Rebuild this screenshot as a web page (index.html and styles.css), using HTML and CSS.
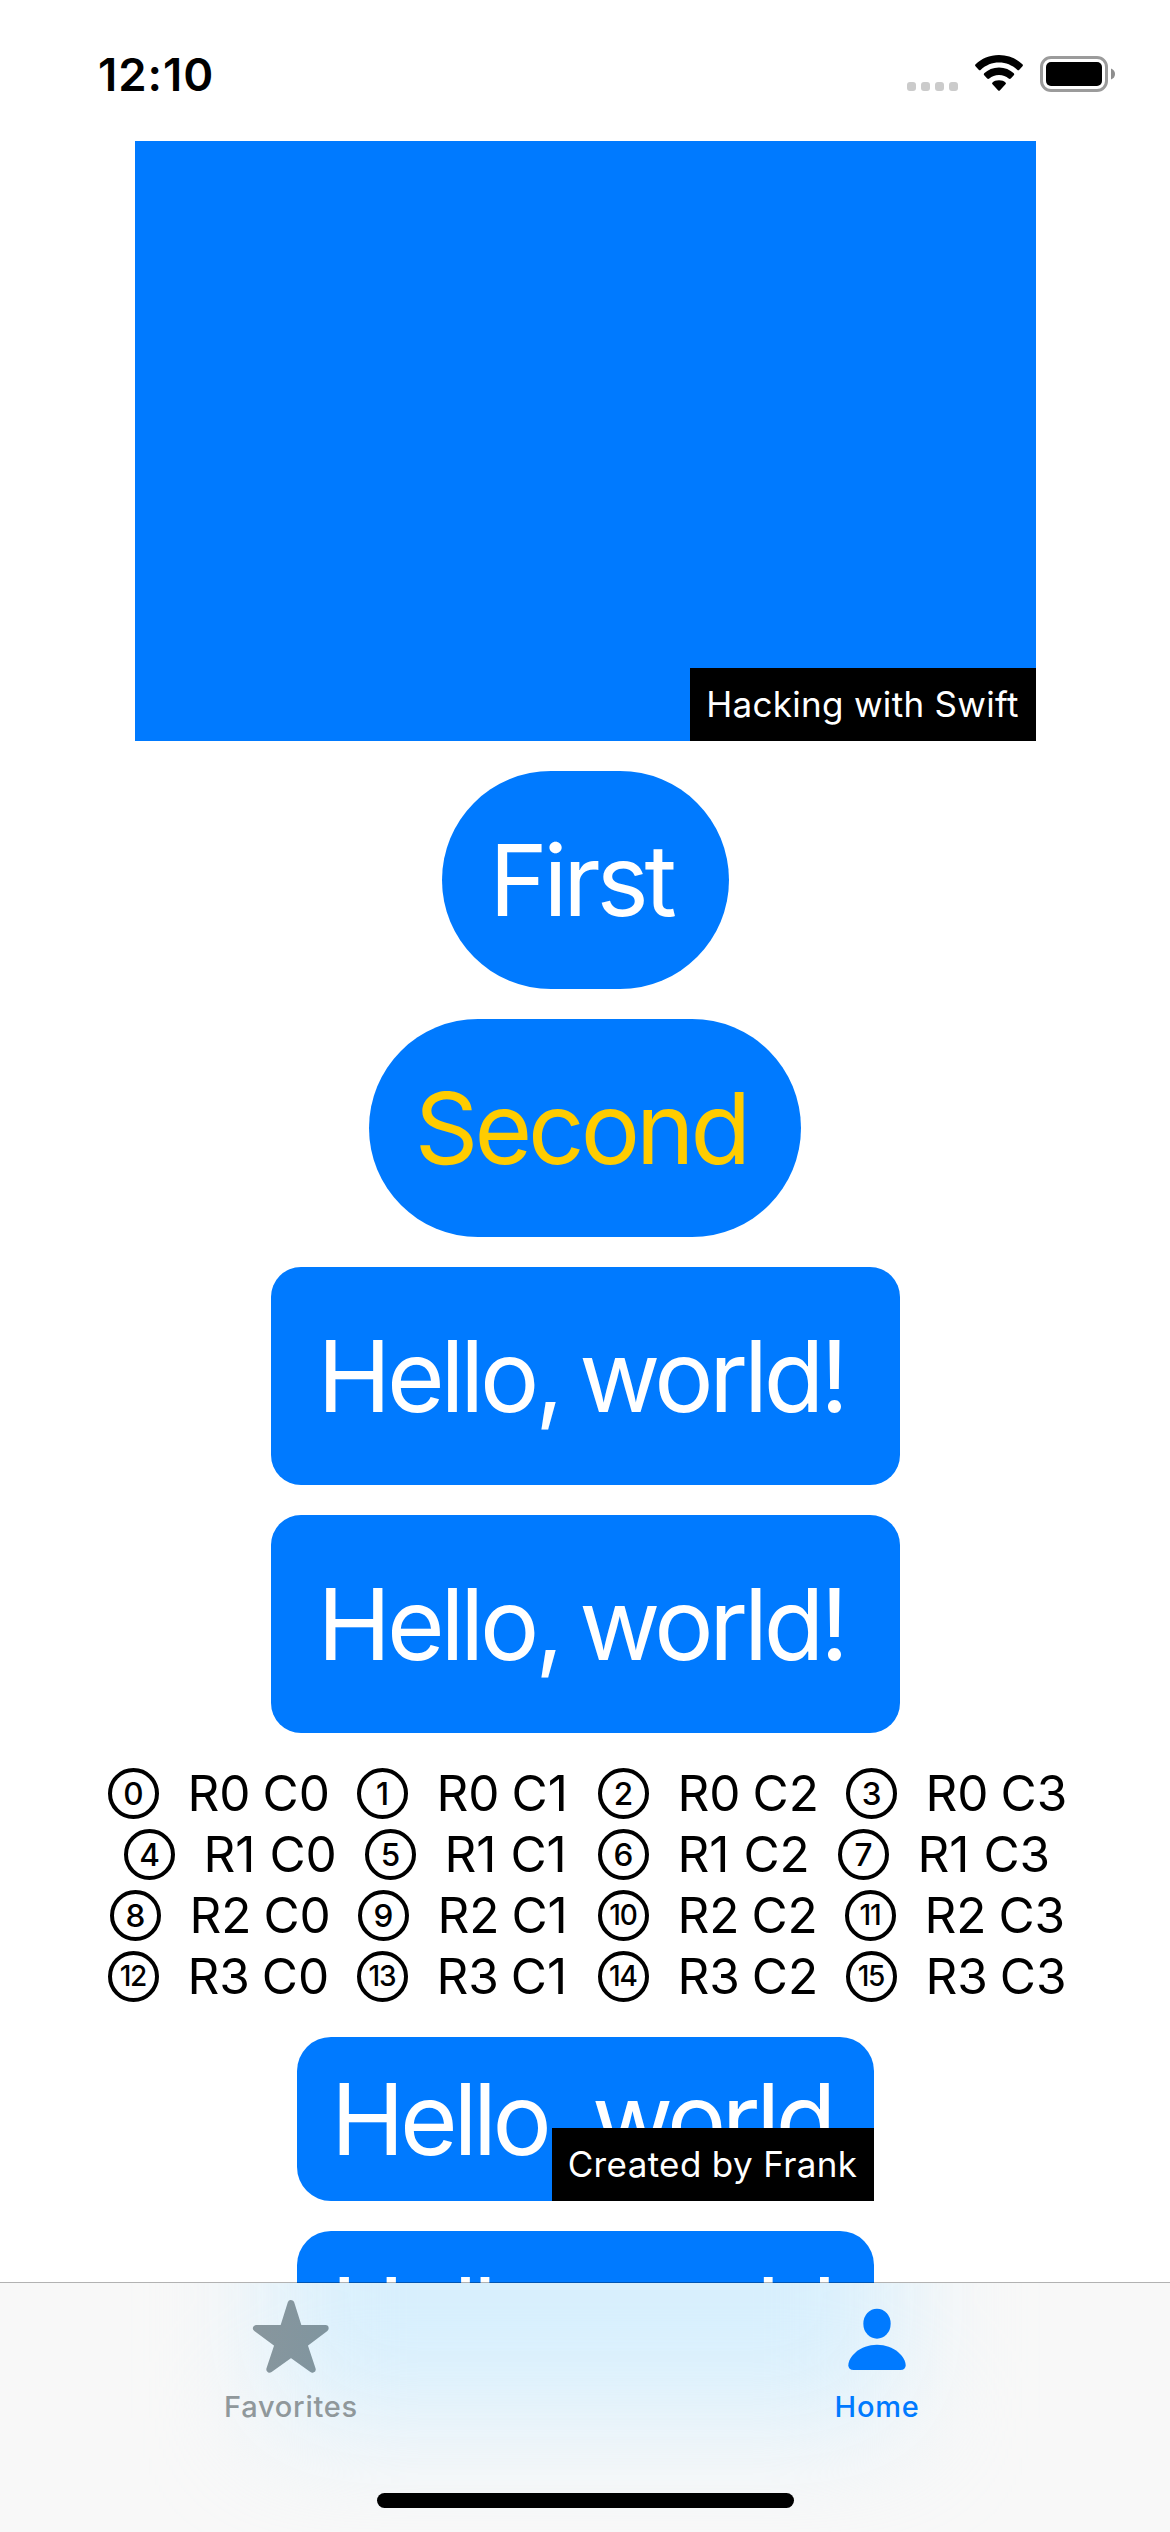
FILE: index.html
```html
<!DOCTYPE html>
<html lang="en">
<head>
<meta charset="utf-8">
<title>Home</title>
<link rel="stylesheet" href="styles.css">
</head>
<body>
<div class="screen">
  <header class="status">
    <span class="time">12:10</span>
    <svg class="status-icons" width="212" height="40" viewBox="0 0 212 40">
      <g fill="#cbcbcb">
        <rect x="0" y="27" width="9" height="9" rx="3"/><rect x="14" y="27" width="9" height="9" rx="3"/>
        <rect x="28" y="27" width="9" height="9" rx="3"/><rect x="42" y="27" width="9" height="9" rx="3"/>
      </g>
      <path d="M92 0C82.500 0 74.500 3.500 68.600 9.300Q67.600 10.300 68.500 11.300L71.700 14.700Q72.700 15.700 73.800 14.700C79 10.200 85 7.600 92 7.600S105 10.200 110.200 14.700Q111.300 15.700 112.300 14.700L115.500 11.300Q116.400 10.300 115.400 9.300C109.500 3.500 101.500 0 92 0Z"/>
      <path d="M92 12.600C86 12.600 81 14.900 77.200 18.300Q76.200 19.300 77.200 20.300L80.200 23.500Q81.200 24.400 82.300 23.500C85 21.300 88 20 92 20S99 21.300 101.700 23.500Q102.800 24.400 103.800 23.500L106.800 20.300Q107.800 19.300 106.800 18.300C103 14.900 98 12.600 92 12.600Z"/>
      <path d="M92 25.300C89 25.300 87 26.200 85.500 27.400Q84.500 28.300 85.500 29.300L91 35.300Q92 36.400 93 35.300L98.500 29.300Q99.500 28.300 98.500 27.400C97 26.200 95 25.300 92 25.300Z"/>
      <rect x="134.500" y="2.500" width="65" height="33" rx="9.500" fill="none" stroke="#9b9b9b" stroke-width="3"/>
      <rect x="139" y="7" width="56" height="24" rx="5"/>
      <path d="M204 13.500Q208 15 208 19T204 24.500Z" fill="#8e8e8e"/>
    </svg>
  </header>

  <main class="content">
    <div class="photo"><span class="caption hacking">Hacking with Swift</span></div>
    <div class="pill first">First</div>
    <div class="pill second">Second</div>
    <div class="card">Hello, world!</div>
    <div class="card">Hello, world!</div>
    <div class="matrix">
      <div class="line r0">
        <span class="cell"><i class="num">0</i>R0 C0</span><span class="cell"><i class="num">1</i>R0 C1</span><span class="cell"><i class="num">2</i>R0 C2</span><span class="cell"><i class="num">3</i>R0 C3</span>
      </div>
      <div class="line r1">
        <span class="cell"><i class="num">4</i>R1 C0</span><span class="cell"><i class="num">5</i>R1 C1</span><span class="cell"><i class="num">6</i>R1 C2</span><span class="cell"><i class="num">7</i>R1 C3</span>
      </div>
      <div class="line r2">
        <span class="cell"><i class="num">8</i>R2 C0</span><span class="cell"><i class="num">9</i>R2 C1</span><span class="cell"><i class="num two">10</i>R2 C2</span><span class="cell"><i class="num two">11</i>R2 C3</span>
      </div>
      <div class="line r3">
        <span class="cell"><i class="num two">12</i>R3 C0</span><span class="cell"><i class="num two">13</i>R3 C1</span><span class="cell"><i class="num two">14</i>R3 C2</span><span class="cell"><i class="num two">15</i>R3 C3</span>
      </div>
    </div>
    <div class="banner">Hello, world<span class="caption created">Created by Frank</span></div>
    <div class="banner">Hello, world</div>
  </main>

  <nav class="tabs">
    <div class="glow"></div>
    <a class="tab">
      <svg class="tab-icon" width="80" height="80" viewBox="154 81 240 240">
        <defs><linearGradient id="star" x1="0" x2="1"><stop offset="0" stop-color="#88969d"/><stop offset="1" stop-color="#80959f"/></linearGradient></defs>
        <path fill="url(#star)" stroke="url(#star)" stroke-width="20" stroke-linejoin="round" d="M274 100L297.600 175L377 175L313.300 223.300L338 298L274 252L210 298L234.700 223.300L170 175L250.400 175Z"/>
      </svg>
      <span class="label">Favorites</span>
    </a>
    <a class="tab active">
      <svg class="tab-icon" width="80" height="80" viewBox="110 81 240 240" fill="#007aff">
        <ellipse cx="230" cy="161" rx="41" ry="45"/>
        <path d="M144 286C144 260 179 224 230 224S316 260 316 286Q316 300 300 300H160Q144 300 144 286Z"/>
      </svg>
      <span class="label">Home</span>
    </a>
    <div class="indicator"></div>
  </nav>
</div>
</body>
</html>
```

FILE: styles.css
```css
* { box-sizing: border-box; }
body { margin: 0; background: #fff; font-family: Inter, "Liberation Sans", sans-serif; color: #000; }
.screen { position: relative; width: 1170px; height: 2532px; overflow: hidden; }

.status { height: 141px; display: flex; justify-content: space-between; align-items: flex-start; padding: 55px 51px 0 98px; }
.time { font-size: 45.5px; font-weight: 600; line-height: 40px; letter-spacing: 1px; }

.content { display: flex; flex-direction: column; align-items: center; gap: 30px; }
.photo { width: 901px; height: 600px; background: #007aff; display: flex; justify-content: flex-end; align-items: flex-end; }
.caption { height: 73px; background: #000; color: #fff; font-size: 35px; line-height: 73px; text-align: center; white-space: nowrap; letter-spacing: .3px; }
.hacking { width: 346px; }
.created { width: 322px; position: absolute; right: 0; bottom: 0; }

.pill, .card { height: 218px; line-height: 219px; background: #007aff; color: #fff; font-size: 99px; text-align: center; white-space: nowrap; padding-right: 8px; }
.pill { border-radius: 109px; }
.first { width: 287px; letter-spacing: -4.200px; }
.second { width: 432px; color: #fc0; letter-spacing: -4px; }
.card { width: 629px; border-radius: 30px; letter-spacing: -4.200px; word-spacing: -4px; }

.matrix { width: 1170px; height: 244px; font-size: 49.500px; word-spacing: -2px; }
.line { display: grid; height: 61px; align-items: center; }
.r0 { padding-left: 108px; grid-template-columns: 249px 241px 248px 1fr; }
.r1 { padding-left: 124px; grid-template-columns: 241px 233px 240px 1fr; word-spacing: 0; }
.r2 { padding-left: 110px; grid-template-columns: 248px 240px 247px 1fr; }
.r3 { padding-left: 108px; grid-template-columns: 249px 241px 248px 1fr; }
.cell { display: flex; align-items: center; gap: 28.500px; white-space: nowrap; line-height: 63px; height: 61px; }
.num { width: 51px; height: 51px; border: 4px solid #000; border-radius: 50%; font-style: normal; font-size: 31.500px; font-weight: 500; line-height: 43px; text-align: center; }
.two { font-size: 28px; letter-spacing: -1.200px; text-indent: -1.200px; }

.banner { position: relative; width: 577px; height: 164px; flex: none; line-height: 164px; border-radius: 34px; background: #007aff; color: #fff; font-size: 99px; text-align: center; white-space: nowrap; letter-spacing: -4.400px; word-spacing: -3px; padding-right: 7px; }
.banner .caption { word-spacing: 0; letter-spacing: .35px; }

.tabs { position: absolute; left: 0; right: 0; bottom: 0; height: 250px; border-top: 1px solid rgba(0,0,0,.3); background: #f8f8f8; background-clip: padding-box; display: grid; grid-template-columns: 1fr 1fr; overflow: hidden; }
.glow { position: absolute; left: 275px; top: -110px; width: 621px; height: 245px; background: #d7effd; filter: blur(60px); }
.tab { position: relative; display: flex; flex-direction: column; align-items: center; padding: 14px 3px 0 0; color: #90989b; }
.active { color: #007aff; padding-right: 1px; }
.tab-icon { display: block; }
.label { font-size: 29px; font-weight: 500; line-height: 36px; margin-top: 12px; letter-spacing: .75px; }
.indicator { position: absolute; left: 377px; bottom: 24px; width: 417px; height: 15px; border-radius: 8px; background: #000; }
```
